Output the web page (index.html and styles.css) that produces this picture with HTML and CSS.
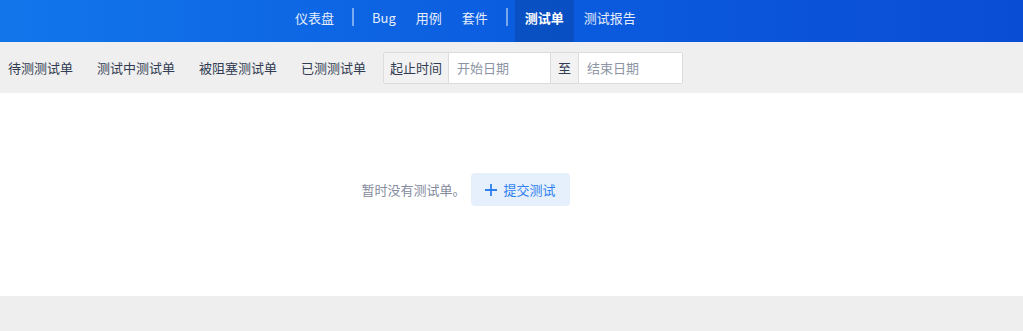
FILE: index.html
```html
<!DOCTYPE html>
<html lang="zh">
<head>
    <meta charset="UTF-8">
    <title>测试单</title>
    <link rel="stylesheet" href="styles.css">
</head>
<body>
    <header class="header">
        <nav class="nav">
            <a class="nav-item">仪表盘</a>
            <span class="nav-sep"></span>
            <a class="nav-item">Bug</a>
            <a class="nav-item">用例</a>
            <a class="nav-item">套件</a>
            <span class="nav-sep"></span>
            <a class="nav-item active">测试单</a>
            <a class="nav-item">测试报告</a>
        </nav>
    </header>

    <div class="subnav">
        <a class="sub-item">待测测试单</a>
        <a class="sub-item">测试中测试单</a>
        <a class="sub-item">被阻塞测试单</a>
        <a class="sub-item">已测测试单</a>
        <div class="date-group">
            <span class="addon">起止时间</span>
            <input type="text" class="date-input" placeholder="开始日期">
            <span class="addon addon-to">至</span>
            <input type="text" class="date-input date-end" placeholder="结束日期">
        </div>
    </div>

    <main class="main">
        <div class="empty">
            <span class="empty-text">暂时没有测试单。</span>
            <a class="btn-create">
                <svg width="14" height="14" viewBox="0 0 14 14"><path d="M7 1v12M1 7h12" stroke="#2e7ff0" stroke-width="1.8" fill="none"/></svg>
                提交测试
            </a>
        </div>
    </main>
</body>
</html>
```

FILE: styles.css
```css
* {
    margin: 0;
    padding: 0;
    box-sizing: border-box;
}

body {
    font-family: "Noto Sans CJK SC", "Noto Sans", sans-serif;
    font-size: 13px;
    background: #eeeeee;
}

.header {
    height: 42px;
    background: linear-gradient(90deg, #1276eb 0%, #0b5ddf 50%, #0a4dd5 100%);
    display: flex;
    padding-left: 285px;
}

.nav {
    display: flex;
    align-items: stretch;
}

.nav-item {
    display: flex;
    align-items: center;
    padding: 0 10px 8px;
    color: #e6eefc;
    cursor: pointer;
}

.nav-item.active {
    background: rgba(0, 0, 0, 0.12);
    color: #fff;
    font-weight: bold;
    margin-left: -1px;
}

.nav-sep {
    width: 2px;
    height: 18px;
    margin: 8px 8px 0;
    background: rgba(255, 255, 255, 0.45);
}

.subnav {
    height: 51px;
    display: flex;
    align-items: center;
    padding-left: 8px;
    gap: 24px;
    background: #efefef;
}

.sub-item {
    color: #313c52;
    cursor: pointer;
}

.date-group {
    display: flex;
    height: 32px;
    margin-left: -7px;
    border: 1px solid #dcdcdc;
    border-radius: 2px;
    background: #fff;
}

.addon {
    display: flex;
    align-items: center;
    padding: 0 6px;
    background: #f2f2f2;
    color: #313c52;
    border-right: 1px solid #dcdcdc;
}

.addon-to {
    padding: 0 7px;
    border-left: 1px solid #dcdcdc;
}

.date-input {
    width: 101px;
    border: none;
    outline: none;
    padding: 0 8px;
    font-family: inherit;
    font-size: 13px;
    color: #313c52;
    background: #fff;
}

.date-end {
    width: 103px;
}

.date-input::placeholder {
    color: #8d95a5;
}

.main {
    height: 203px;
    background: #fff;
}

.empty {
    display: flex;
    align-items: center;
    justify-content: center;
    padding-top: 80px;
    padding-right: 92px;
}

.empty-text {
    color: #838a9d;
    margin-right: 5px;
}

.btn-create {
    display: flex;
    align-items: center;
    gap: 6px;
    height: 33px;
    padding: 0 14px 0 13px;
    background: #e6f0fc;
    border-radius: 4px;
    color: #2e7ff0;
    cursor: pointer;
}
```
